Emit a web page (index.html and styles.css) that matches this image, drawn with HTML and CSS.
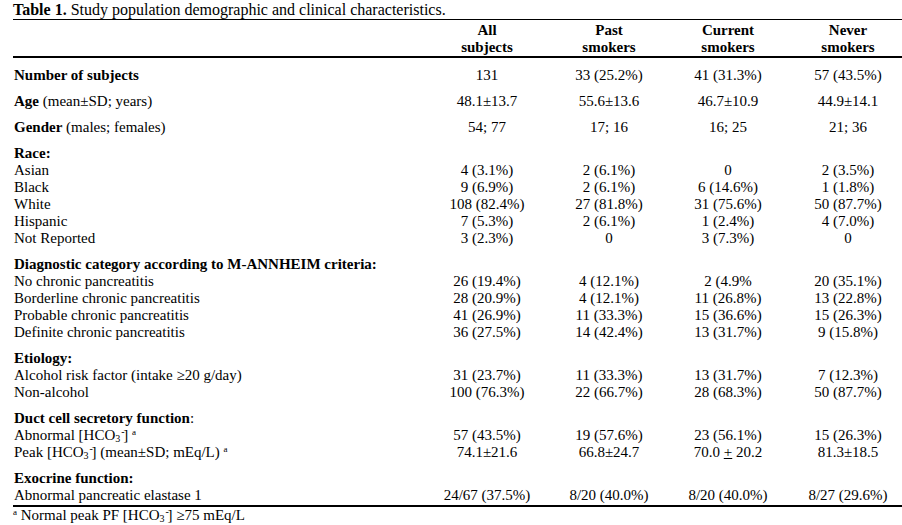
FILE: index.html
```html
<!DOCTYPE html>
<html lang="en">
<head>
<meta charset="utf-8">
<title>Table 1</title>
<link rel="stylesheet" href="styles.css">
</head>
<body>
<div class="page">
  <p class="caption"><b>Table 1.</b> Study population demographic and clinical characteristics.</p>
  <table class="t">
    <colgroup>
      <col class="c-label">
      <col class="c-all">
      <col class="c-past">
      <col class="c-cur">
      <col class="c-never">
    </colgroup>
    <thead>
      <tr>
        <th class="lab"></th>
        <th class="v">All<br>subjects</th>
        <th class="v">Past<br>smokers</th>
        <th class="v">Current<br>smokers</th>
        <th class="v last">Never<br>smokers</th>
      </tr>
    </thead>
    <tbody>
      <tr class="sec">
        <td class="lab"><b>Number of subjects</b></td>
        <td class="v">131</td><td class="v">33 (25.2%)</td><td class="v">41 (31.3%)</td><td class="v last">57 (43.5%)</td>
      </tr>
      <tr class="sec">
        <td class="lab"><b>Age</b> (mean±SD; years)</td>
        <td class="v">48.1±13.7</td><td class="v">55.6±13.6</td><td class="v">46.7±10.9</td><td class="v last">44.9±14.1</td>
      </tr>
      <tr class="sec">
        <td class="lab"><b>Gender</b> (males; females)</td>
        <td class="v">54; 77</td><td class="v">17; 16</td><td class="v">16; 25</td><td class="v last">21; 36</td>
      </tr>
      <tr class="sec">
        <td class="lab"><b>Race:</b></td><td></td><td></td><td></td><td></td>
      </tr>
      <tr>
        <td class="lab">Asian</td>
        <td class="v">4 (3.1%)</td><td class="v">2 (6.1%)</td><td class="v">0</td><td class="v last">2 (3.5%)</td>
      </tr>
      <tr>
        <td class="lab">Black</td>
        <td class="v">9 (6.9%)</td><td class="v">2 (6.1%)</td><td class="v">6 (14.6%)</td><td class="v last">1 (1.8%)</td>
      </tr>
      <tr>
        <td class="lab">White</td>
        <td class="v">108 (82.4%)</td><td class="v">27 (81.8%)</td><td class="v">31 (75.6%)</td><td class="v last">50 (87.7%)</td>
      </tr>
      <tr>
        <td class="lab">Hispanic</td>
        <td class="v">7 (5.3%)</td><td class="v">2 (6.1%)</td><td class="v">1 (2.4%)</td><td class="v last">4 (7.0%)</td>
      </tr>
      <tr>
        <td class="lab">Not Reported</td>
        <td class="v">3 (2.3%)</td><td class="v">0</td><td class="v">3 (7.3%)</td><td class="v last">0</td>
      </tr>
      <tr class="sec">
        <td class="lab" colspan="5"><b>Diagnostic category according to M-ANNHEIM criteria:</b></td>
      </tr>
      <tr>
        <td class="lab">No chronic pancreatitis</td>
        <td class="v">26 (19.4%)</td><td class="v">4 (12.1%)</td><td class="v">2 (4.9%</td><td class="v last">20 (35.1%)</td>
      </tr>
      <tr>
        <td class="lab">Borderline chronic pancreatitis</td>
        <td class="v">28 (20.9%)</td><td class="v">4 (12.1%)</td><td class="v">11 (26.8%)</td><td class="v last">13 (22.8%)</td>
      </tr>
      <tr>
        <td class="lab">Probable chronic pancreatitis</td>
        <td class="v">41 (26.9%)</td><td class="v">11 (33.3%)</td><td class="v">15 (36.6%)</td><td class="v last">15 (26.3%)</td>
      </tr>
      <tr>
        <td class="lab">Definite chronic pancreatitis</td>
        <td class="v">36 (27.5%)</td><td class="v">14 (42.4%)</td><td class="v">13 (31.7%)</td><td class="v last">9 (15.8%)</td>
      </tr>
      <tr class="sec">
        <td class="lab"><b>Etiology:</b></td><td></td><td></td><td></td><td></td>
      </tr>
      <tr>
        <td class="lab">Alcohol risk factor (intake ≥20 g/day)</td>
        <td class="v">31 (23.7%)</td><td class="v">11 (33.3%)</td><td class="v">13 (31.7%)</td><td class="v last">7 (12.3%)</td>
      </tr>
      <tr>
        <td class="lab">Non-alcohol</td>
        <td class="v">100 (76.3%)</td><td class="v">22 (66.7%)</td><td class="v">28 (68.3%)</td><td class="v last">50 (87.7%)</td>
      </tr>
      <tr class="sec">
        <td class="lab"><b>Duct cell secretory function</b>:</td><td></td><td></td><td></td><td></td>
      </tr>
      <tr>
        <td class="lab">Abnormal [HCO<span class="ion"><sub>3</sub><sup>-</sup></span>] <sup class="fn">a</sup></td>
        <td class="v">57 (43.5%)</td><td class="v">19 (57.6%)</td><td class="v">23 (56.1%)</td><td class="v last">15 (26.3%)</td>
      </tr>
      <tr>
        <td class="lab">Peak [HCO<span class="ion"><sub>3</sub><sup>-</sup></span>] (mean±SD; mEq/L) <sup class="fn">a</sup></td>
        <td class="v">74.1±21.6</td><td class="v">66.8±24.7</td><td class="v">70.0 <u>+</u> 20.2</td><td class="v last">81.3±18.5</td>
      </tr>
      <tr class="sec">
        <td class="lab"><b>Exocrine function:</b></td><td></td><td></td><td></td><td></td>
      </tr>
      <tr class="end">
        <td class="lab">Abnormal pancreatic elastase 1</td>
        <td class="v">24/67 (37.5%)</td><td class="v">8/20 (40.0%)</td><td class="v">8/20 (40.0%)</td><td class="v last">8/27 (29.6%)</td>
      </tr>
    </tbody>
  </table>
  <p class="note"><sup class="fn">a</sup> Normal peak PF [HCO<span class="ion"><sub>3</sub><sup>-</sup></span>] ≥75 mEq/L</p>
</div>
</body>
</html>
```

FILE: styles.css
```css
html, body {
  margin: 0;
  padding: 0;
  background: #ffffff;
  color: #000000;
}

.page {
  font-family: "Liberation Serif", "Times New Roman", serif;
  font-size: 15px;
  line-height: 17px;
  width: 902px;
}

.caption {
  margin: 0;
  padding: 1px 0 0 13px;
  height: 18px;
  font-size: 16px;
  line-height: 18px;
  white-space: nowrap;
}

.t {
  margin-left: 13px;
  width: 889px;
  border-collapse: collapse;
  table-layout: fixed;
  border-top: 1px solid #000;
  border-bottom: 2px solid #000;
}

.c-label { width: 413px; }
.c-all { width: 122px; }
.c-past { width: 122px; }
.c-cur { width: 116px; }
.c-never { width: 116px; }

.t th,
.t td {
  padding: 0;
  vertical-align: top;
  font-weight: normal;
  white-space: nowrap;
}

.t thead th {
  font-weight: bold;
  padding-top: 2px;
  border-bottom: 2px solid #000;
  text-align: center;
}

.t .lab {
  text-align: left;
  padding-left: 1px;
}

.t .v {
  text-align: center;
}

.t .v.last {
  padding-left: 10px;
  padding-right: 2px;
}

.t tr.sec > td {
  padding-top: 9px;
}

.t tr.end > td {
  padding-bottom: 1px;
}

.ion {
  display: inline-block;
  position: relative;
  width: 8px;
  height: 17px;
  vertical-align: top;
}

.ion sub,
.ion sup {
  position: absolute;
  left: 0;
  font-size: 10px;
  line-height: 10px;
}

.ion sub { top: 7px; }
.ion sup { top: 0; left: 6px; }

sup.fn {
  font-size: 9px;
  line-height: 0;
  vertical-align: 5px;
}

.note {
  margin: 0;
  padding: 0 0 0 13px;
  line-height: 16px;
  white-space: nowrap;
}

u {
  text-decoration: underline;
}
```
